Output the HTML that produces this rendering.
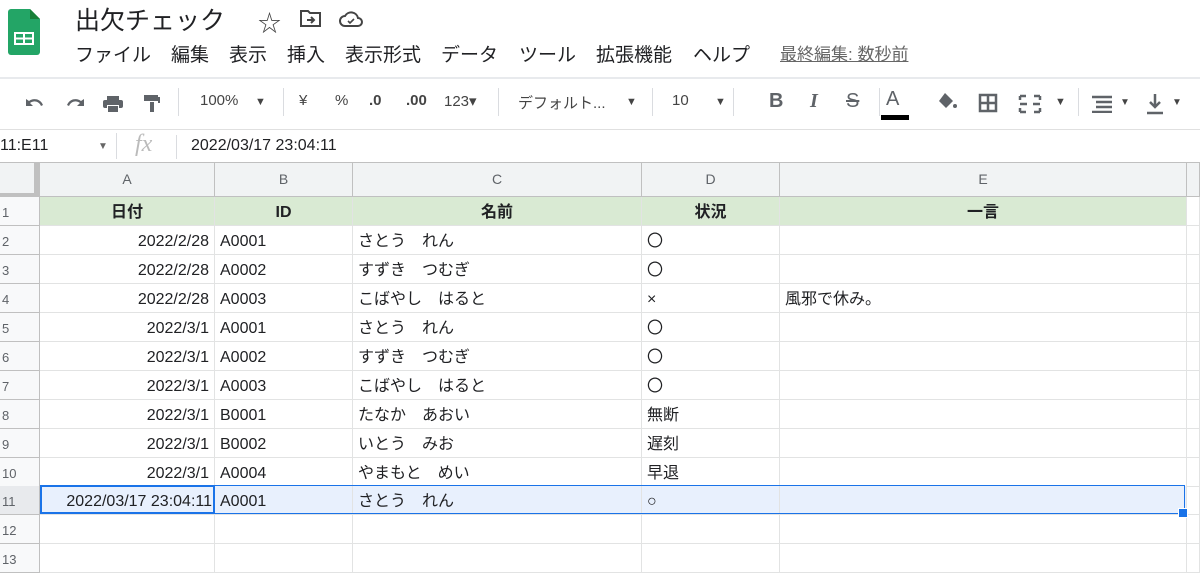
<!DOCTYPE html>
<html><head><meta charset="utf-8"><style>
*{margin:0;padding:0;box-sizing:border-box}
body{width:1200px;height:557px;overflow:hidden;background:#fff;font-family:"Liberation Sans","Noto Sans CJK JP",sans-serif;color:#202124;position:relative}
.abs{position:absolute}
.title{left:75px;top:1px;font-size:25px;color:#202124}
.menu{top:43px;font-size:19px;color:#202124;line-height:26px}
.tb{top:92px;font-size:15px;color:#444}
.ic{fill:#5f6368}
.row{position:absolute;left:0;width:1200px;height:29px;display:flex;font-size:16px;line-height:28px}
.row>div{height:29px;border-right:1px solid #e2e3e3;border-bottom:1px solid #e2e3e3;padding:2px 5px 0;white-space:nowrap;overflow:hidden;flex:none}
.row>div:nth-child(1){width:40px;background:#f8f9fa;color:#5f6368;font-size:13px;padding:2px 0 0 2px;border-right:1px solid #c0c0c0;border-bottom-color:#c0c0c0}
.row>div:nth-child(2){width:175px;text-align:right}
.row>div:nth-child(3){width:138px}
.row>div:nth-child(4){width:289px}
.row>div:nth-child(5){width:138px}
.row>div:nth-child(6){width:407px}
.row>div:nth-child(7){width:13px}
.g>div:not(:first-child):not(:last-child){background:#d9ead3;font-weight:bold;text-align:center}
.s>div:not(:first-child):not(:last-child){background:#e8f0fd}
.hd{top:163px;height:34px}
.hd>div{height:34px!important;background:#f1f3f4!important;color:#5f6368;text-align:center!important;font-size:14px;line-height:33px;padding:0!important;border-color:#c0c0c0!important;border-bottom:1px solid #c0c0c0}
</style></head><body>
<svg class="abs" style="left:8px;top:9px" width="32" height="46" viewBox="0 0 32 46"><path d="M3 0H22L32 10V43a3 3 0 0 1-3 3H3a3 3 0 0 1-3-3V3a3 3 0 0 1 3-3z" fill="#23a566"/><path d="M22 0V10H32z" fill="#188038"/><rect x="6" y="23" width="20" height="13" fill="#fff"/><rect x="8" y="25" width="7" height="3.5" fill="#23a566"/><rect x="17" y="25" width="7" height="3.5" fill="#23a566"/><rect x="8" y="30.5" width="7" height="3.5" fill="#23a566"/><rect x="17" y="30.5" width="7" height="3.5" fill="#23a566"/></svg>
<div class="abs title">出欠チェック</div>
<div class="abs" style="left:258px;top:4px;font-size:23px;color:#444">☆</div>
<svg class="abs" style="left:300px;top:9px" width="22" height="18" viewBox="0 0 22 18"><path d="M1 2h7l2 2h10v13H1z" fill="none" stroke="#444" stroke-width="2"/><path d="M7 11h7M11 8l3 3-3 3" fill="none" stroke="#444" stroke-width="2"/></svg>
<svg class="abs" style="left:339px;top:10px" width="24" height="18" viewBox="0 0 24 18"><path d="M6 16a5 5 0 0 1 0-10 7 7 0 0 1 13 2 4 4 0 0 1 0 8z" fill="none" stroke="#444" stroke-width="2"/><path d="M9 11l2 2 4-4" fill="none" stroke="#444" stroke-width="1.6"/></svg>
<div class="abs menu" style="left:75px">ファイル</div>
<div class="abs menu" style="left:171px">編集</div>
<div class="abs menu" style="left:229px">表示</div>
<div class="abs menu" style="left:287px">挿入</div>
<div class="abs menu" style="left:345px">表示形式</div>
<div class="abs menu" style="left:441px">データ</div>
<div class="abs menu" style="left:519px">ツール</div>
<div class="abs menu" style="left:596px">拡張機能</div>
<div class="abs menu" style="left:693px">ヘルプ</div>
<div class="abs" style="left:780px;top:43px;font-size:17px;color:#666;text-decoration:underline;line-height:24px">最終編集: 数秒前</div>
<div class="abs" style="left:0;top:77px;width:1200px;height:2px;background:#e8eaed"></div>
<div class="abs" style="left:0;top:129px;width:1200px;height:1px;background:#e0e0e0"></div>
<svg class="abs" style="left:22px;top:90px" width="150" height="26" viewBox="0 0 150 26"><g class="ic"><path d="M4 9v7h7l-3-3a7 7 0 0 1 11 3l2-1a9 9 0 0 0-14-4z"/><path d="M62 9v7h-7l3-3a7 7 0 0 0-11 3l-2-1a9 9 0 0 1 14-4z"/><rect x="85" y="6" width="12" height="4"/><rect x="81" y="10" width="20" height="8" rx="2"/><rect x="85" y="15" width="12" height="7" fill="#fff"/><rect x="86" y="16" width="10" height="6"/><rect x="122" y="5" width="14" height="6"/><rect x="136" y="7" width="2" height="6"/><rect x="128" y="12" width="4" height="10"/></g></svg>
<div class="abs" style="left:178px;top:88px;width:1px;height:28px;background:#dadce0"></div>
<div class="abs tb" style="left:200px">100%</div>
<div class="abs tb" style="left:255px;font-size:11px;top:96px">▼</div>
<div class="abs" style="left:283px;top:88px;width:1px;height:28px;background:#dadce0"></div>
<div class="abs tb" style="left:299px">¥</div>
<div class="abs tb" style="left:335px">%</div>
<div class="abs tb" style="left:369px;font-weight:bold">.0</div>
<div class="abs tb" style="left:406px;font-weight:bold">.00</div>
<div class="abs tb" style="left:444px">123▾</div>
<div class="abs" style="left:498px;top:88px;width:1px;height:28px;background:#dadce0"></div>
<div class="abs tb" style="left:518px">デフォルト...</div>
<div class="abs tb" style="left:626px;font-size:11px;top:96px">▼</div>
<div class="abs" style="left:652px;top:88px;width:1px;height:28px;background:#dadce0"></div>
<div class="abs tb" style="left:672px">10</div>
<div class="abs tb" style="left:715px;font-size:11px;top:96px">▼</div>
<div class="abs" style="left:733px;top:88px;width:1px;height:28px;background:#dadce0"></div>
<div class="abs tb" style="left:769px;font-size:20px;top:90px;font-weight:bold;color:#5f6368">B</div>
<div class="abs tb" style="left:810px;font-size:20px;top:90px;font-style:italic;font-family:'Liberation Serif';font-weight:bold;color:#5f6368">I</div>
<div class="abs tb" style="left:846px;font-size:20px;top:90px;text-decoration:line-through;color:#5f6368">S</div>
<div class="abs tb" style="left:886px;font-size:20px;top:88px;color:#5f6368">A</div>
<div class="abs" style="left:881px;top:115px;width:28px;height:5px;background:#000"></div>
<div class="abs" style="left:879px;top:88px;width:1px;height:28px;background:#dadce0"></div>
<svg class="abs" style="left:936px;top:92px" width="22" height="20" viewBox="0 0 22 20"><path d="M9 1l8 8-7 7-7-7z" fill="#5f6368"/><circle cx="19" cy="14" r="2" fill="#5f6368"/></svg>
<svg class="abs" style="left:978px;top:93px" width="20" height="20" viewBox="0 0 20 20"><path d="M2 2h16v16H2zM10 2v16M2 10h16" fill="none" stroke="#5f6368" stroke-width="2.5"/></svg>
<svg class="abs" style="left:1018px;top:94px" width="24" height="20" viewBox="0 0 24 20"><path d="M2 2h6M16 2h6M2 18h6M16 18h6M2 2v4M22 2v4M2 14v4M22 14v4M2 10h7M15 10h7" fill="none" stroke="#5f6368" stroke-width="2.5"/></svg>
<div class="abs tb" style="left:1055px;font-size:11px;top:96px">▼</div>
<div class="abs" style="left:1078px;top:88px;width:1px;height:28px;background:#dadce0"></div>
<svg class="abs" style="left:1092px;top:95px" width="20" height="18" viewBox="0 0 20 18"><path d="M0 2h20M4 7h16M4 12h16M0 17h20" stroke="#5f6368" stroke-width="2.5"/></svg>
<div class="abs tb" style="left:1120px;font-size:10px;top:97px">▼</div>
<svg class="abs" style="left:1145px;top:93px" width="20" height="22" viewBox="0 0 20 22"><path d="M10 1v13M5 9l5 5 5-5M2 20h16" fill="none" stroke="#5f6368" stroke-width="2.5"/></svg>
<div class="abs tb" style="left:1172px;font-size:10px;top:97px">▼</div>
<div class="abs" style="left:0;top:137px;font-size:16px">11:E11</div>
<div class="abs" style="left:98px;top:141px;font-size:10px;color:#666">▼</div>
<div class="abs" style="left:116px;top:133px;width:1px;height:26px;background:#dadce0"></div>
<div class="abs" style="left:135px;top:131px;font-size:24px;color:#bbb;font-style:italic;font-family:'Liberation Serif'">fx</div>
<div class="abs" style="left:176px;top:135px;width:1px;height:24px;background:#dadce0"></div>
<div class="abs" style="left:191px;top:137px;font-size:16px">2022/03/17 23:04:11</div>
<div class="abs" style="left:0;top:162px;width:1200px;height:1px;background:#c0c0c0"></div>

<div class="row hd"><div style="border-right:6px solid #bdbdbd;border-bottom:4px solid #bdbdbd"></div><div>A</div><div>B</div><div>C</div><div>D</div><div>E</div><div></div></div>
<div class="row g" style="top:197px"><div>1</div><div>日付</div><div>ID</div><div>名前</div><div>状況</div><div>一言</div><div></div></div>
<div class="row" style="top:226px"><div>2</div><div>2022/2/28</div><div>A0001</div><div>さとう　れん</div><div>〇</div><div></div><div></div></div>
<div class="row" style="top:255px"><div>3</div><div>2022/2/28</div><div>A0002</div><div>すずき　つむぎ</div><div>〇</div><div></div><div></div></div>
<div class="row" style="top:284px"><div>4</div><div>2022/2/28</div><div>A0003</div><div>こばやし　はると</div><div>×</div><div>風邪で休み。</div><div></div></div>
<div class="row" style="top:313px"><div>5</div><div>2022/3/1</div><div>A0001</div><div>さとう　れん</div><div>〇</div><div></div><div></div></div>
<div class="row" style="top:342px"><div>6</div><div>2022/3/1</div><div>A0002</div><div>すずき　つむぎ</div><div>〇</div><div></div><div></div></div>
<div class="row" style="top:371px"><div>7</div><div>2022/3/1</div><div>A0003</div><div>こばやし　はると</div><div>〇</div><div></div><div></div></div>
<div class="row" style="top:400px"><div>8</div><div>2022/3/1</div><div>B0001</div><div>たなか　あおい</div><div>無断</div><div></div><div></div></div>
<div class="row" style="top:429px"><div>9</div><div>2022/3/1</div><div>B0002</div><div>いとう　みお</div><div>遅刻</div><div></div><div></div></div>
<div class="row" style="top:458px"><div>10</div><div>2022/3/1</div><div>A0004</div><div>やまもと　めい</div><div>早退</div><div></div><div></div></div>
<div class="row s" style="top:486px"><div style="background:#e8eaed">11</div><div style="padding:2px 2px 0">2022/03/17 23:04:11</div><div>A0001</div><div>さとう　れん</div><div>○</div><div></div><div></div></div>
<div class="row" style="top:515px"><div>12</div><div></div><div></div><div></div><div></div><div></div><div></div></div>
<div class="row" style="top:544px"><div>13</div><div></div><div></div><div></div><div></div><div></div><div></div></div>
<div class="abs" style="left:40px;top:485px;width:1145px;height:29px;border:1px solid #1a73e8"></div>
<div class="abs" style="left:40px;top:485px;width:175px;height:29px;border:2px solid #1a73e8"></div>
<div class="abs" style="left:1179px;top:509px;width:8px;height:8px;background:#1a73e8;outline:1px solid #fff"></div>
</body></html>
